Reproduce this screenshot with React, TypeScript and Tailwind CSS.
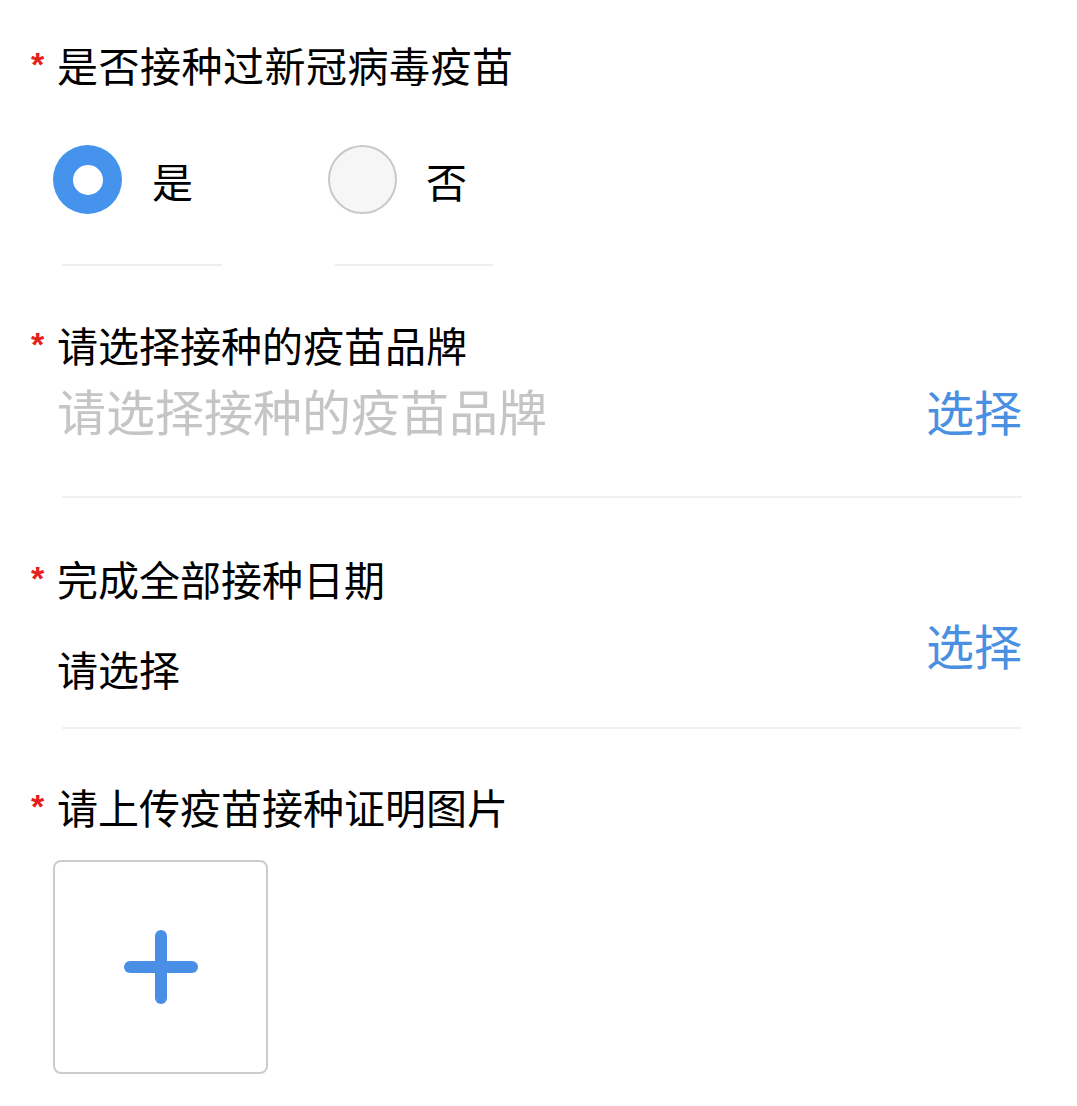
import React from "react";

const FONT = { fontFamily: '"Noto Sans CJK SC", "Noto Sans", sans-serif' };

function Label({ text, className = "" }: { text: string; className?: string }) {
  return (
    <div className={"flex items-start " + className}>
      <span
        className="w-[26px] -ml-[26px] text-[34px] leading-none font-bold text-[#e3201b] mt-[4px]"
        style={{ fontFamily: '"Liberation Sans", sans-serif' }}
      >
        *
      </span>
      <span className="text-[41px] leading-[42px] text-black">{text}</span>
    </div>
  );
}

export default function App() {
  return (
    <div className="w-[1077px] h-[1106px] bg-white overflow-hidden" style={FONT}>
      <div className="pl-[57px] pr-[55px]">
        {/* Section 1 */}
        <Label text="是否接种过新冠病毒疫苗" className="pt-[43px] [&>span:last-child]:tracking-[0.5px]" />
        <div className="flex items-center mt-[60px] -ml-[4px]">
          <div className="flex items-center w-[275px]">
            <div className="w-[69px] h-[69px] rounded-full bg-[#4593ec] flex items-center justify-center">
              <div className="w-[30px] h-[30px] rounded-full bg-white" />
            </div>
            <span className="ml-[30px] text-[41px] leading-[42px] text-black">是</span>
          </div>
          <div className="flex items-center">
            <div className="w-[69px] h-[69px] rounded-full bg-[#f6f6f6] border-2 border-[#c9c9c9]" />
            <span className="ml-[29px] text-[41px] leading-[42px] text-black">否</span>
          </div>
        </div>
        <div className="flex mt-[50px] ml-[5px]">
          <div className="w-[160px] h-[2px] bg-[#eeeeee]" />
          <div className="w-[158px] h-[2px] bg-[#eeeeee] ml-[113px]" />
        </div>

        {/* Section 2 */}
        <Label text="请选择接种的疫苗品牌" className="mt-[57px]" />
        <div className="flex items-center justify-between mt-[20px]">
          <span className="text-[49px] leading-[50px] text-[#c5c5c5]">请选择接种的疫苗品牌</span>
          <span className="text-[48px] leading-[50px] text-[#4a90e2]">选择</span>
        </div>
        <div className="h-[2px] bg-[#f0f0f0] mt-[61px] ml-[5px]" />

        {/* Section 3 */}
        <Label text="完成全部接种日期" className="mt-[59px]" />
        <div className="flex items-start justify-between mt-[20px]">
          <span className="text-[41px] leading-[42px] text-black mt-[28px]">请选择</span>
          <span className="text-[48px] leading-[50px] text-[#4a90e2]">选择</span>
        </div>
        <div className="h-[2px] bg-[#f0f0f0] mt-[38px] ml-[5px]" />

        {/* Section 4 */}
        <Label text="请上传疫苗接种证明图片" className="mt-[56px]" />
        <div className="mt-[33px] -ml-[4px] w-[215px] h-[214px] rounded-[8px] border-2 border-[#cccccc] flex items-center justify-center">
          <svg width="74" height="74" viewBox="0 0 74 74">
            <line x1="6" y1="37" x2="68" y2="37" stroke="#4a8fe6" strokeWidth="12" strokeLinecap="round" />
            <line x1="37" y1="6" x2="37" y2="68" stroke="#4a8fe6" strokeWidth="12" strokeLinecap="round" />
          </svg>
        </div>
      </div>
    </div>
  );
}
